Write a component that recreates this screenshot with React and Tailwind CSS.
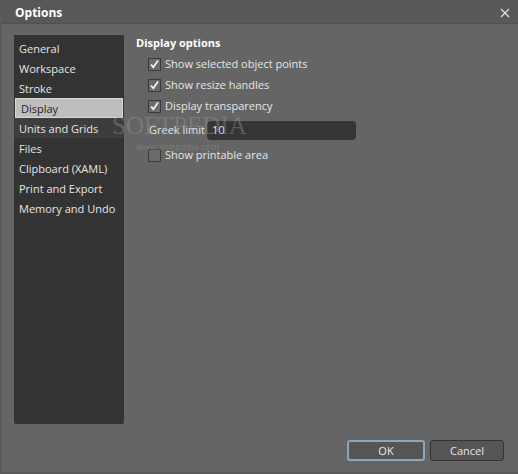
import React from "react";

const items = ["General","Workspace","Stroke","Display","Units and Grids","Files","Clipboard (XAML)","Print and Export","Memory and Undo"];

function Check({ checked }) {
  return (
    <svg width="13" height="13" viewBox="0 0 13 13" className="shrink-0">
      <rect x="0.5" y="0.5" width="12" height="12" fill="#6a6a6a" stroke="#3a3a3a" />
      {checked && <path d="M3 6.5 L5.3 9.2 L10 2.5" fill="none" stroke="#f0f0f0" strokeWidth="1.8" />}
    </svg>
  );
}

function Row({ checked, label }) {
  return (
    <div className="flex items-center gap-[4px] h-[21px] pl-[12px] whitespace-nowrap">
      <Check checked={checked} />
      <span>{label}</span>
    </div>
  );
}

export default function App() {
  return (
    <div className="w-[518px] h-[474px] bg-[#656565] flex flex-col relative text-[11px] text-[#e6e6e6] border-l-2 border-b-2 border-[#5a5a5a]" style={{ fontFamily: '"Open Sans", "Noto Sans", sans-serif' }}>
      <div className="h-[24px] bg-[#585858] flex items-center justify-between pl-[13px] pr-[8px] pt-[2px] shrink-0 border-b border-[#505050]">
        <span className="font-bold text-white text-[12px]">Options</span>
        <svg width="10" height="10" viewBox="0 0 10 10"><path d="M1 1 L9 9 M9 1 L1 9" stroke="#e0e0e0" strokeWidth="1.3" /></svg>
      </div>
      <div className="flex flex-1 pt-[11px] pl-[12px]">
        <div className="w-[110px] h-[389px] bg-[#333333] rounded-b-[2px] pt-[3px] flex flex-col whitespace-nowrap">
          {items.map((it) => (
            <div key={it} className={
              "h-[20px] flex items-center pl-[5px] leading-none " +
              (it === "Display" ? "bg-[#bebebe] text-[#1e1e1e] mx-[1px] pl-[4px] border border-[#d8d8d8]" : it === "Units and Grids" ? "bg-[#3d3d3d]" : "")
            }>{it}</div>
          ))}
        </div>
        <div className="flex flex-col pl-[12px] pt-[0px]">
          <div className="font-bold text-white h-[16px] flex items-center mb-[3px]">Display options</div>
          <Row checked label="Show selected object points" />
          <Row checked label="Show resize handles" />
          <Row checked label="Display transparency" />
          <div className="flex items-center h-[20px] mt-[3px] pl-[13px] whitespace-nowrap">
            <span className="w-[58px]">Greek limit</span>
            <div className="w-[149px] h-[19px] bg-[#353535] rounded-[4px] flex items-center pl-[5px]">10</div>
          </div>
          <div className="mt-[5px]"><Row checked={false} label="Show printable area" /></div>
        </div>
      </div>
      <div className="flex justify-end gap-[5px] pr-[14px] pb-[11px]">
        <button className="w-[78px] h-[21px] bg-[#555555] border-2 border-[#8ca4bc] rounded-[3px] text-[#e6e6e6] leading-none">OK</button>
        <button className="w-[74px] h-[21px] bg-[#555555] border border-[#333333] rounded-[3px] text-[#e6e6e6] leading-none">Cancel</button>
      </div>
      <div className="absolute left-[110px] top-[113px] text-[25px] leading-none text-[#9a9a9a]/40 pointer-events-none" style={{ fontFamily: '"Liberation Serif", serif' }}>SOFTPEDIA</div>
      <div className="absolute left-[134px] top-[142px] text-[9px] leading-none text-[#8a8a8a]/60 pointer-events-none">www.softpedia.com</div>
    </div>
  );
}
